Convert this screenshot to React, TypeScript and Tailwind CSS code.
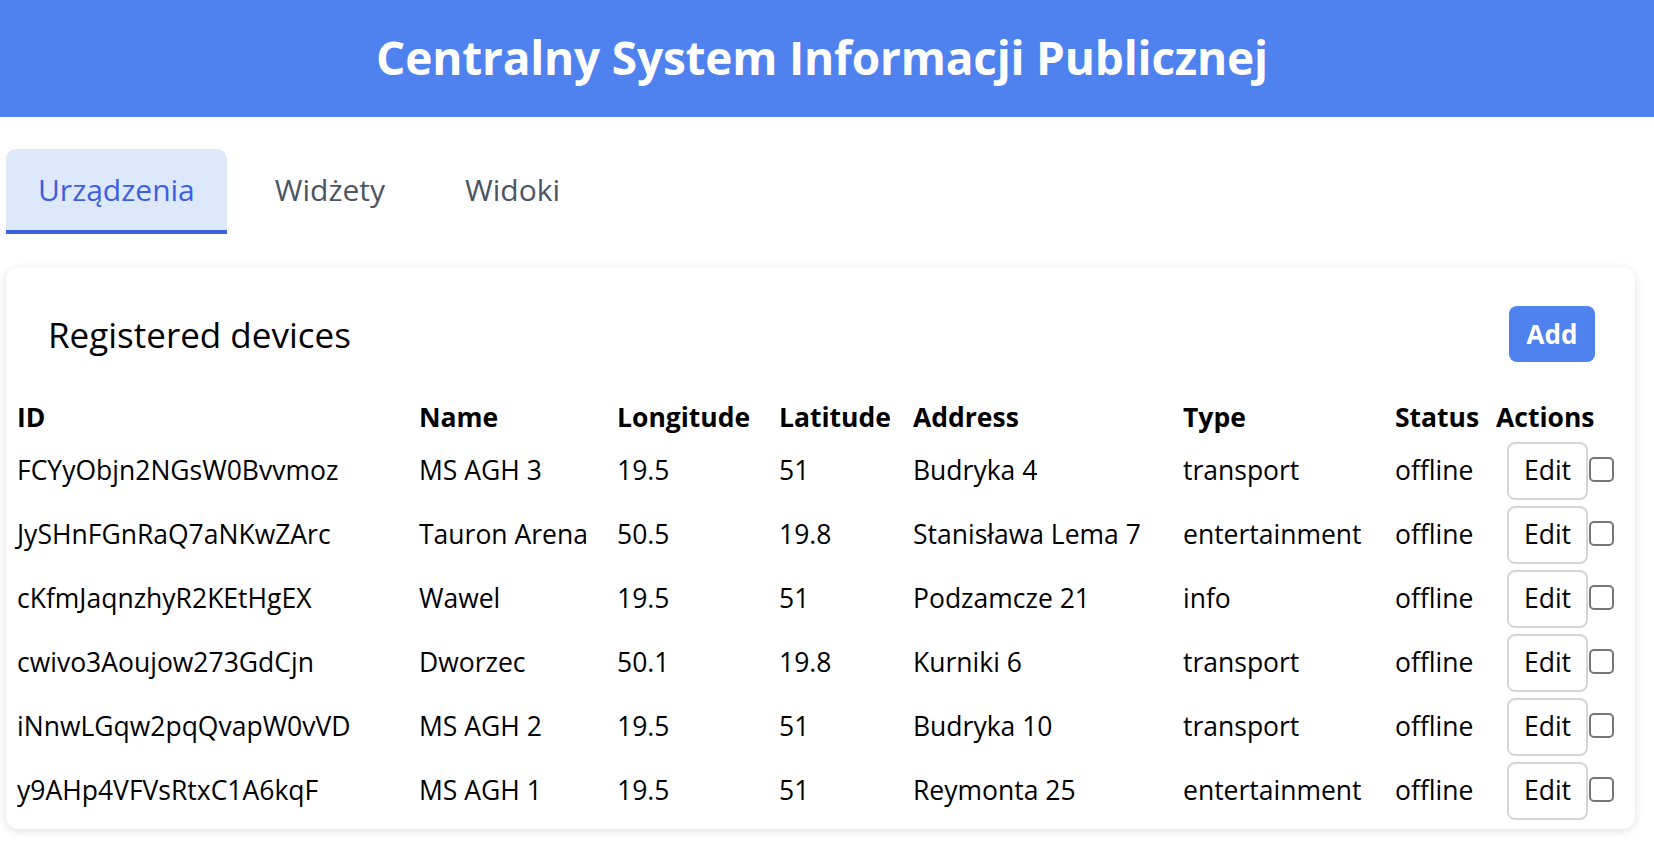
import React from "react";

const rows = [
  ["FCYyObjn2NGsW0Bvvmoz", "MS AGH 3", "19.5", "51", "Budryka 4", "transport", "offline"],
  ["JySHnFGnRaQ7aNKwZArc", "Tauron Arena", "50.5", "19.8", "Stanisława Lema 7", "entertainment", "offline"],
  ["cKfmJaqnzhyR2KEtHgEX", "Wawel", "19.5", "51", "Podzamcze 21", "info", "offline"],
  ["cwivo3Aoujow273GdCjn", "Dworzec", "50.1", "19.8", "Kurniki 6", "transport", "offline"],
  ["iNnwLGqw2pqQvapW0vVD", "MS AGH 2", "19.5", "51", "Budryka 10", "transport", "offline"],
  ["y9AHp4VFVsRtxC1A6kqF", "MS AGH 1", "19.5", "51", "Reymonta 25", "entertainment", "offline"],
];

const headers = ["ID", "Name", "Longitude", "Latitude", "Address", "Type", "Status", "Actions"];

export default function App() {
  return (
    <div
      className="min-h-[844px] bg-white text-black"
      style={{ fontFamily: '"Open Sans", "Noto Sans", sans-serif' }}
    >
      <header className="h-[117px] bg-[#4f82ee] flex items-center justify-center">
        <h1 className="text-[46px] font-bold text-white leading-none tracking-[-0.2px] mb-[4px] mr-[10px]">
          Centralny System Informacji Publicznej
        </h1>
      </header>

      <nav className="mt-[32px] ml-[6px] flex gap-4">
        <button className="h-[85px] px-8 rounded-t-[10px] bg-[#dee8fb] border-b-4 border-[#3a62e0] text-[30px] text-[#3f5fe0] flex items-center">
          Urządzenia
        </button>
        <button className="h-[85px] px-8 border-b-4 border-transparent text-[30px] text-[#4b5563] flex items-center">
          Widżety
        </button>
        <button className="h-[85px] px-8 border-b-4 border-transparent text-[30px] text-[#4b5563] flex items-center">
          Widoki
        </button>
      </nav>

      <section className="mt-[33px] ml-[6px] mr-[19px] bg-white rounded-xl shadow-[0_2px_8px_rgba(0,0,0,0.12)] pb-[6px]">
        <div className="flex items-center justify-between pl-[42px] pr-[40px] pt-[39px] pb-[34px]">
          <h2 className="text-[35px] leading-none">Registered devices</h2>
          <button className="h-[56px] w-[86px] rounded-lg bg-[#4f82ee] text-white font-bold text-[26px] flex items-center justify-center">
            Add
          </button>
        </div>

        <table className="ml-[11px] table-fixed border-collapse text-[26.5px]" style={{ width: 1607 }}>
          <colgroup>
            <col className="w-[402px]" />
            <col className="w-[198px]" />
            <col className="w-[162px]" />
            <col className="w-[134px]" />
            <col className="w-[270px]" />
            <col className="w-[212px]" />
            <col className="w-[101px]" />
            <col className="w-[128px]" />
          </colgroup>
          <thead>
            <tr className="h-[43px]">
              {headers.map((h) => (
                <th key={h} className="text-left font-bold p-0 align-middle whitespace-nowrap">
                  {h}
                </th>
              ))}
            </tr>
          </thead>
          <tbody>
            {rows.map((r) => (
              <tr key={r[0]} className="h-[64px]">
                {r.map((c, i) => (
                  <td key={i} className="p-0 align-middle whitespace-nowrap">
                    {c}
                  </td>
                ))}
                <td className="p-0 align-middle">
                  <div className="flex items-center pl-[11px]">
                    <button className="h-[58px] w-[81px] rounded-lg border-2 border-[#d4d6db] bg-white text-[26.5px] flex items-center justify-center">
                      Edit
                    </button>
                    <span className="ml-[1px] mb-[4px] w-[25px] h-[25px] rounded-[5px] border-2 border-[#767676] bg-white inline-block" />
                  </div>
                </td>
              </tr>
            ))}
          </tbody>
        </table>
      </section>
    </div>
  );
}
